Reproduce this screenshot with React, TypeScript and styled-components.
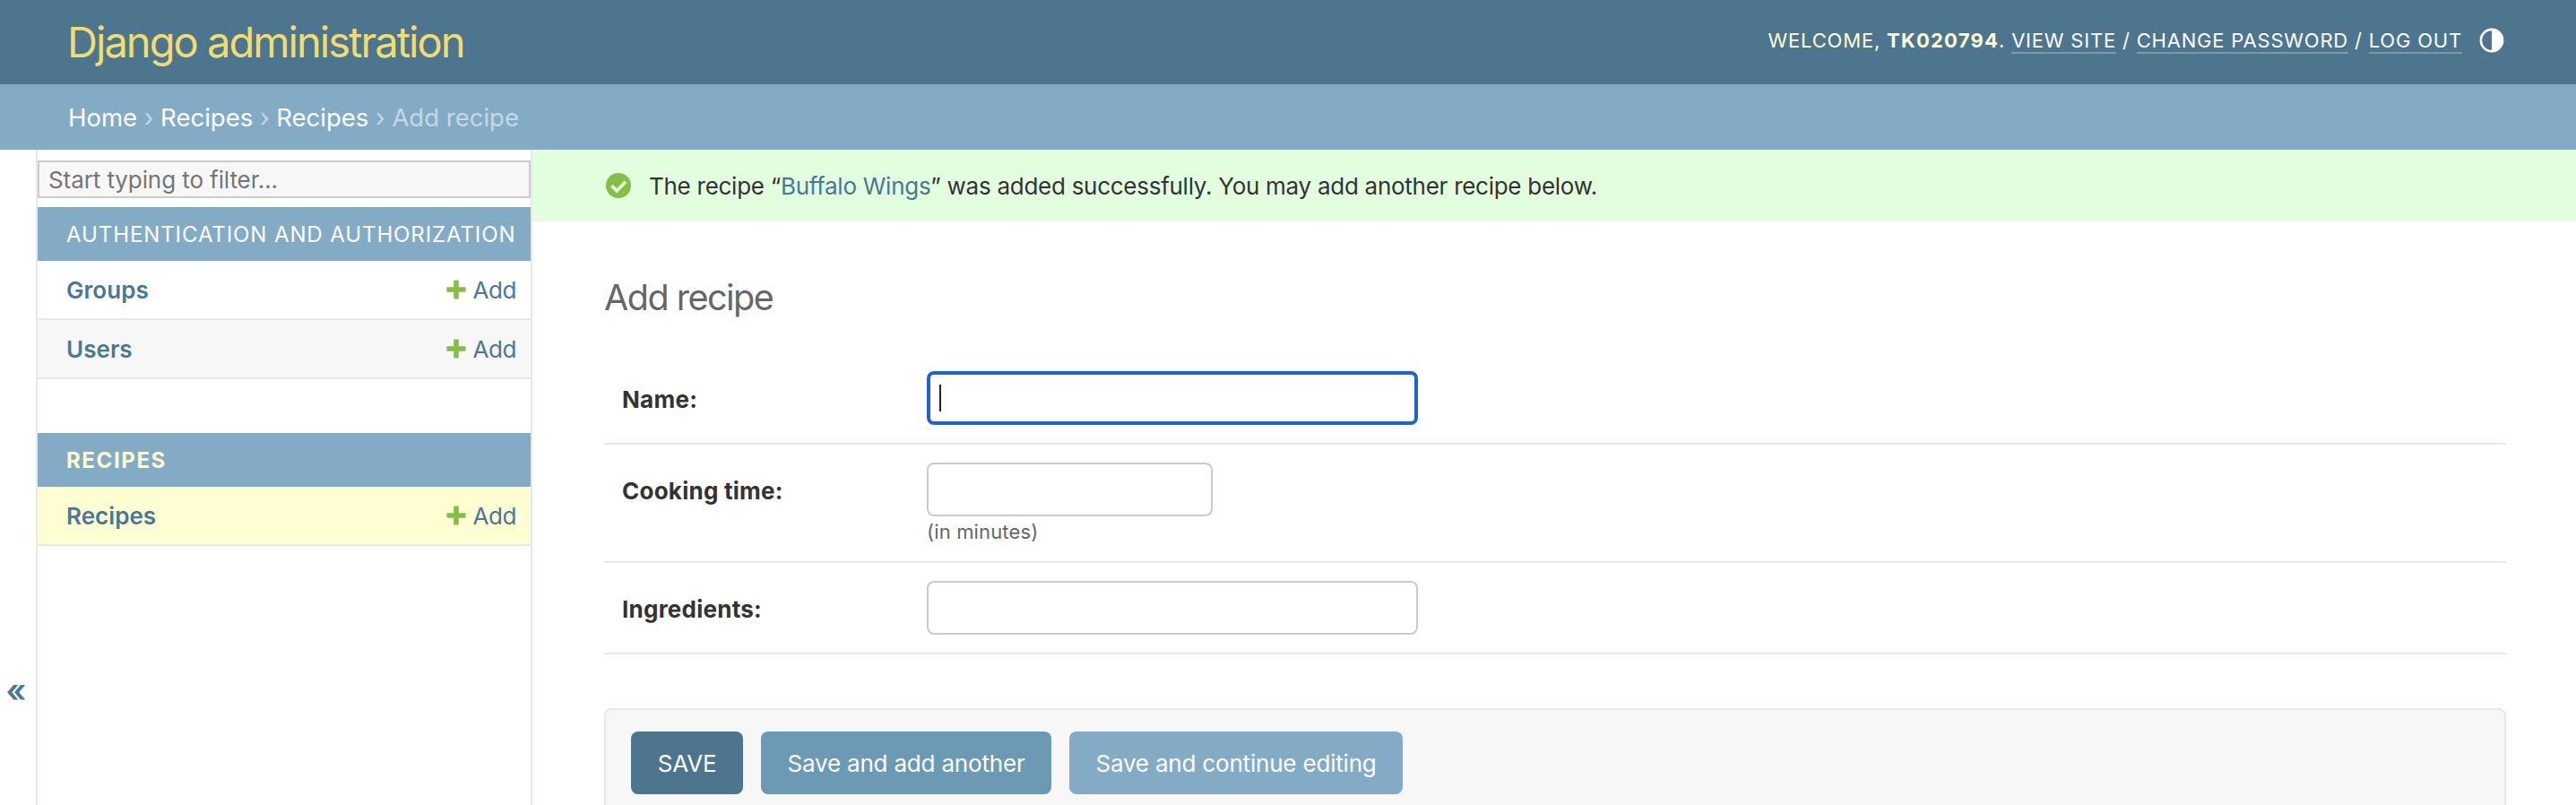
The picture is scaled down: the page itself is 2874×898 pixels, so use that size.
import React from "react";
import styled, { createGlobalStyle, css } from "styled-components";

const c = {
  header: "#4e758e",
  bar: "#84abc5",
  secondary: "#6c9ab5",
  link: "#4a7893",
  title: "#f1dc72",
  cream: "#fffed3",
  success: "#e3fedf",
  green: "#84bd48",
  hairline: "#e8e8e8",
  border: "#cccccc",
  soft: "#f7f7f7",
  text: "#333333",
  muted: "#666666",
  crumb: "#c3d8e5",
  focus: "#1e64c8",
};

const GlobalStyle = createGlobalStyle`
  *, *::before, *::after { box-sizing: border-box; }
  body {
    margin: 0;
    background: #fff;
    color: ${c.text};
    font-family: Inter, "Liberation Sans", sans-serif;
    font-size: 26px;
    overflow: hidden;
  }
  a { color: inherit; text-decoration: none; }
`;

const Page = styled.div`
  display: flex;
  flex-direction: column;
  height: 898px;
  overflow: hidden;
`;

const Header = styled.header`
  display: flex;
  justify-content: space-between;
  align-items: center;
  flex: 0 0 94px;
  padding: 0 80px 2px 75px;
  background: ${c.header};
`;

const SiteName = styled.h1`
  margin: 0;
  font-size: 47px;
  font-weight: 400;
  letter-spacing: -1.95px;
  color: ${c.title};
`;

const UserTools = styled.div`
  display: flex;
  align-items: center;
  padding-bottom: 2px;
  font-size: 22px;
  line-height: 28px;
  letter-spacing: 0.8px;
  text-transform: uppercase;
  white-space: pre;
  color: ${c.cream};

  strong { font-weight: 700; letter-spacing: 1.2px; }
`;

const ToolLink = styled.a`
  color: #fff;
  border-bottom: 2px solid rgba(255, 255, 255, 0.27);
`;

const ThemeIcon = styled.svg`
  display: block;
  margin-left: 19px;
`;

const Breadcrumbs = styled.nav`
  display: flex;
  align-items: center;
  flex: 0 0 73px;
  padding-left: 76px;
  background: ${c.bar};
  color: ${c.crumb};
  font-size: 27.5px;
  white-space: pre;

  a { color: #fff; }
`;

const Body = styled.div`
  display: flex;
  flex: 1;
  min-height: 0;
`;

const Toggle = styled.button`
  display: flex;
  align-items: center;
  justify-content: center;
  flex: 0 0 42px;
  padding: 475px 4px 0 0;
  height: 731px;
  border: 0;
  border-right: 2px solid ${c.hairline};
  background: #fff;
  color: ${c.link};
  font-family: inherit;
  font-size: 36px;
  font-weight: 600;
  line-height: 1;
`;

const Sidebar = styled.nav`
  flex: 0 0 552px;
  padding-top: 12px;
  border-right: 2px solid ${c.hairline};
`;

const Filter = styled.input`
  display: block;
  width: 100%;
  height: 42px;
  margin: 0 0 10px;
  padding: 0 10px;
  border: 2px solid ${c.border};
  border-radius: 0;
  background: ${c.soft};
  font-family: inherit;
  font-size: 26px;
  letter-spacing: -0.09px;

  &::placeholder { color: #757575; opacity: 1; }
`;

const Module = styled.section`
  margin-bottom: 60px;
`;

const Caption = styled.h2<{ $current?: boolean }>`
  display: flex;
  align-items: center;
  height: 60px;
  margin: 0;
  padding-left: 32px;
  background: ${c.bar};
  color: #fff;
  font-size: 24px;
  font-weight: 400;
  letter-spacing: 0.9px;
  text-transform: uppercase;
  white-space: nowrap;
  ${(p) => p.$current && css`color: ${c.cream}; font-weight: 700; letter-spacing: 1.6px;`}
`;

const ModelRow = styled.div<{ $tone?: "alt" | "current" }>`
  display: flex;
  align-items: center;
  justify-content: space-between;
  height: 66px;
  padding: 0 16px 0 32px;
  border-bottom: 2px solid ${c.hairline};
  background: ${(p) => (p.$tone === "alt" ? c.soft : p.$tone === "current" ? c.cream : "#fff")};
  color: ${c.link};
`;

const ModelName = styled.a`
  font-weight: 600;
  letter-spacing: 0.05px;
`;

const AddLink = styled.a`
  display: flex;
  align-items: center;
  gap: 7px;
  letter-spacing: -0.4px;
`;

const Main = styled.main`
  flex: 1;
  min-width: 0;
`;

const Message = styled.div`
  display: flex;
  align-items: center;
  gap: 20px;
  height: 80px;
  padding-left: 82px;
  background: ${c.success};
  letter-spacing: -0.27px;

  a { color: ${c.link}; }
`;

const Content = styled.div`
  padding: 61px 78px 0 80px;
`;

const PageTitle = styled.h2`
  margin: 0 0 38px;
  font-size: 39.5px;
  font-weight: 370;
  line-height: 48px;
  letter-spacing: -1.5px;
  color: ${c.muted};
`;

const FormRow = styled.div`
  display: flex;
  align-items: flex-start;
  padding: 20px 0;
  border-bottom: 2px solid ${c.hairline};
`;

const Label = styled.label`
  flex: 0 0 360px;
  padding: 2px 0 0 20px;
  font-weight: 700;
  line-height: 60px;
  height: 60px;
  letter-spacing: 0.25px;
`;

const Field = styled.div<{ $width: number; $focused?: boolean }>`
  display: flex;
  align-items: center;
  width: ${(p) => p.$width}px;
  height: 60px;
  padding-left: 10px;
  border: ${(p) => (p.$focused ? `4px solid ${c.focus}` : `2px solid ${c.border}`)};
  border-radius: 8px;
  background: #fff;
`;

const Caret = styled.span`
  width: 2px;
  height: 30px;
  background: #222;
`;

const Help = styled.div`
  padding: 4px 0 0;
  font-size: 22px;
  line-height: 26px;
  letter-spacing: 0.15px;
  color: ${c.muted};
`;

const SubmitRow = styled.div`
  display: flex;
  gap: 20px;
  height: 122px;
  margin-top: 60px;
  padding: 24px 28px;
  border: 2px solid ${c.hairline};
  border-radius: 8px;
  background: ${c.soft};
`;

const Button = styled.button<{ $bg: string; $width: number }>`
  width: ${(p) => p.$width}px;
  height: 70px;
  padding: 0;
  border: 0;
  border-radius: 8px;
  background: ${(p) => p.$bg};
  color: #fff;
  font-family: inherit;
  font-size: 26px;
  letter-spacing: -0.19px;
  white-space: nowrap;
`;

const PlusIcon = () => (
  <svg width="22" height="22" viewBox="0 0 22 22" fill={c.green}>
    <rect x="8.2" y="0.4" width="5.6" height="21.2" rx="1" />
    <rect x="0.4" y="8.2" width="21.2" height="5.6" rx="1" />
  </svg>
);

const CheckIcon = () => (
  <svg width="28" height="28" viewBox="0 0 28 28">
    <circle cx="14" cy="14" r="14" fill={c.green} />
    <path d="M6.4 14.1 12.2 19.8 22 9.8" fill="none" stroke={c.success} strokeWidth="3.7" />
  </svg>
);

const Model = ({ name, tone }: { name: string; tone?: "alt" | "current" }) => (
  <ModelRow $tone={tone}>
    <ModelName href="#">{name}</ModelName>
    <AddLink href="#">
      <PlusIcon />
      Add
    </AddLink>
  </ModelRow>
);

export default function App() {
  return (
    <Page>
      <GlobalStyle />
      <Header>
        <SiteName>Django administration</SiteName>
        <UserTools>
          <span>
            Welcome, <strong>tk020794</strong>. <ToolLink href="#">View site</ToolLink> /{" "}
            <ToolLink href="#">Change password</ToolLink> / <ToolLink href="#">Log out</ToolLink>
          </span>
          <ThemeIcon width="28" height="28" viewBox="0 0 28 28">
            <circle cx="14" cy="14" r="12.1" fill="none" stroke="#fff" strokeWidth="2.6" />
            <path d="M14 1.9a12.1 12.1 0 0 1 0 24.2z" fill="#fff" />
          </ThemeIcon>
        </UserTools>
      </Header>
      <Breadcrumbs>
        <a href="#">Home</a> › <a href="#">Recipes</a> › <a href="#">Recipes</a> › Add recipe
      </Breadcrumbs>
      <Body>
        <Toggle>«</Toggle>
        <Sidebar>
          <Filter placeholder="Start typing to filter..." />
          <Module>
            <Caption>Authentication and Authorization</Caption>
            <Model name="Groups" />
            <Model name="Users" tone="alt" />
          </Module>
          <Module>
            <Caption $current>Recipes</Caption>
            <Model name="Recipes" tone="current" />
          </Module>
        </Sidebar>
        <Main>
          <Message>
            <CheckIcon />
            <span>
              The recipe “<a href="#">Buffalo Wings</a>” was added successfully. You may add another recipe below.
            </span>
          </Message>
          <Content>
            <PageTitle>Add recipe</PageTitle>
            <FormRow>
              <Label>Name:</Label>
              <Field $width={548} $focused>
                <Caret />
              </Field>
            </FormRow>
            <FormRow>
              <Label>Cooking time:</Label>
              <div>
                <Field $width={319} />
                <Help>(in minutes)</Help>
              </div>
            </FormRow>
            <FormRow>
              <Label>Ingredients:</Label>
              <Field $width={548} />
            </FormRow>
            <SubmitRow>
              <Button $bg={c.header} $width={125}>SAVE</Button>
              <Button $bg={c.secondary} $width={324}>Save and add another</Button>
              <Button $bg={c.bar} $width={372}>Save and continue editing</Button>
            </SubmitRow>
          </Content>
        </Main>
      </Body>
    </Page>
  );
}
